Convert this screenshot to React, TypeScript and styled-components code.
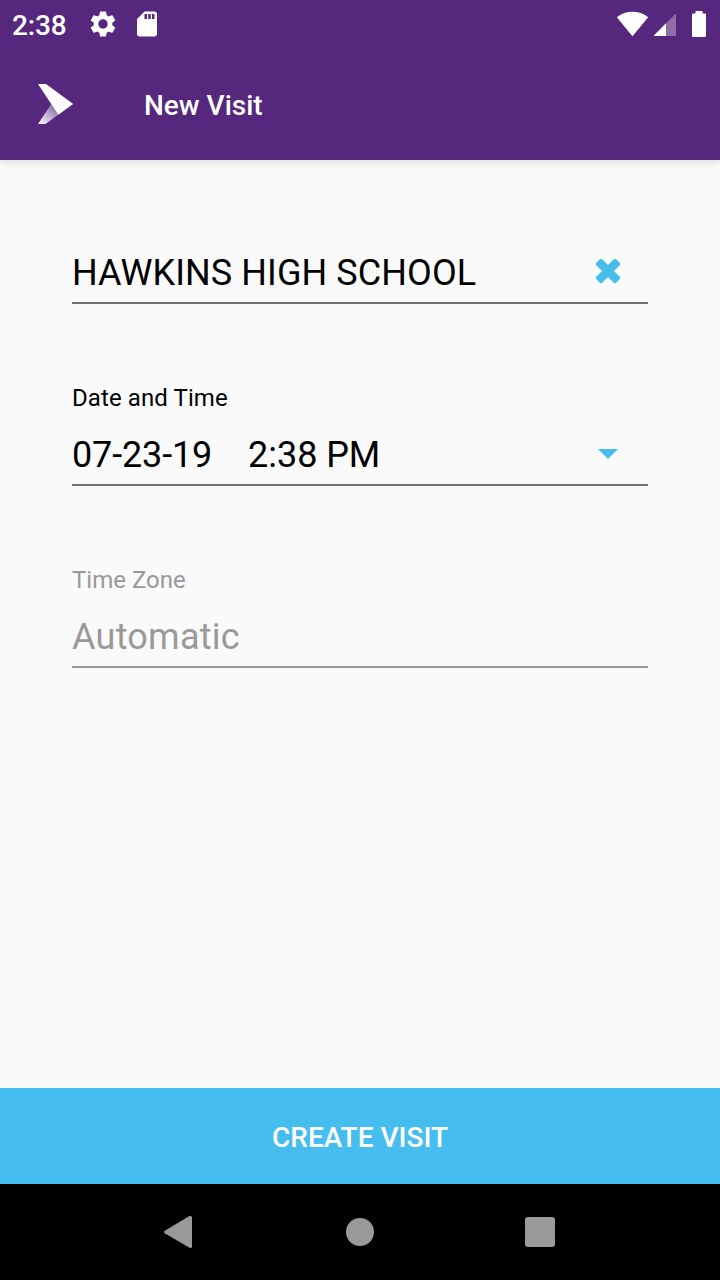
import React from "react";
import styled, { createGlobalStyle } from "styled-components";

const GlobalStyle = createGlobalStyle`
  * { box-sizing: border-box; }
  html, body { margin: 0; padding: 0; }
  body { font-family: Roboto, "Noto Sans", sans-serif; background: #fafafa; }
`;

const Screen = styled.div`
  width: 720px;
  height: 1280px;
  display: flex;
  flex-direction: column;
  overflow: hidden;
  background: #fafafa;
`;

const Header = styled.header`
  flex: none;
  background: #55277d;
  color: #fff;
  box-shadow: 0 2px 8px rgba(0, 0, 0, 0.13);
`;

const StatusBar = styled.div`
  height: 48px;
  display: flex;
  justify-content: space-between;
`;

const StatusGroup = styled.div`
  display: flex;
  align-items: flex-start;
`;

const Clock = styled.span`
  width: 88px;
  padding-left: 12px;
  font-size: 28px;
  font-weight: 500;
  line-height: 52px;
  height: 48px;
  letter-spacing: -0.15px;
  white-space: nowrap;
`;

const StatusIcon = styled.svg<{ $gap?: number }>`
  display: block;
  height: 48px;
  fill: #fff;
  margin-right: ${(p) => p.$gap ?? 0}px;
`;

const AppBar = styled.div`
  height: 112px;
  display: flex;
  align-items: center;
  padding-left: 36px;
`;

const Logo = styled.svg`
  display: block;
  width: 40px;
  height: 44px;
  margin-right: 68px;
`;

const Title = styled.h1`
  margin: 0;
  font-size: 28px;
  font-weight: 500;
  line-height: 36px;
  padding-top: 4px;
`;

const Form = styled.main`
  flex: 1;
  display: flex;
  flex-direction: column;
  padding: 82px 72px 0;
`;

const Field = styled.section<{ $disabled?: boolean }>`
  color: ${(p) => (p.$disabled ? "#999" : "#000")};
  border-bottom: 2px solid ${(p) => (p.$disabled ? "#999" : "#737373")};
  margin-bottom: 78px;
`;

const Label = styled.div<{ $tracking?: number }>`
  font-size: 24px;
  line-height: 32px;
  height: 42px;
  letter-spacing: ${(p) => p.$tracking ?? 0}px;
`;

const ValueRow = styled.div`
  height: 60px;
  display: flex;
  align-items: flex-start;
  font-size: 36px;
  line-height: 62px;
  white-space: pre;
`;

const Value = styled.span<{ $tracking?: number }>`
  margin-right: 36px;
  letter-spacing: ${(p) => p.$tracking ?? 0}px;
`;

const FieldIcon = styled.svg`
  display: block;
  width: 32px;
  height: 32px;
  margin: 14px 24px 0 auto;
  fill: #45bdef;
`;

const CreateButton = styled.button`
  flex: none;
  height: 96px;
  border: 0;
  padding: 4px 0 0;
  background: #45bdef;
  color: #fff;
  font: 500 28px/36px Roboto, sans-serif;
`;

const NavBar = styled.nav`
  flex: none;
  height: 96px;
  background: #000;
  display: flex;
  justify-content: center;
  align-items: center;
  gap: 134px;
`;

const NavIcon = styled.svg`
  display: block;
  width: 48px;
  height: 48px;
  fill: #999;
`;

export default function App() {
  return (
    <>
      <GlobalStyle />
      <Screen>
        <Header>
          <StatusBar>
            <StatusGroup>
              <Clock>2:38</Clock>
              <StatusIcon width="30" viewBox="88 0 30 48" $gap={14}>
                <path
                  transform="translate(87.4 8.4) scale(1.3)"
                  d="M19.14 12.94c.04-.3.06-.61.06-.94 0-.32-.02-.64-.07-.94l2.03-1.58c.18-.14.23-.41.12-.61l-1.92-3.32c-.12-.22-.37-.29-.59-.22l-2.39.96c-.5-.38-1.03-.7-1.62-.94l-.36-2.54c-.04-.24-.24-.41-.48-.41h-3.84c-.24 0-.43.17-.47.41l-.36 2.54c-.59.24-1.13.57-1.62.94l-2.39-.96c-.22-.08-.47 0-.59.22L2.74 8.87c-.12.21-.08.47.12.61l2.03 1.58c-.05.3-.09.63-.09.94s.02.64.07.94l-2.03 1.58c-.18.14-.23.41-.12.61l1.92 3.32c.12.22.37.29.59.22l2.39-.96c.5.38 1.03.7 1.62.94l.36 2.54c.05.24.24.41.48.41h3.84c.24 0 .44-.17.47-.41l.36-2.54c.59-.24 1.13-.56 1.62-.94l2.39.96c.22.08.47 0 .59-.22l1.92-3.32c.12-.22.07-.47-.12-.61l-2.01-1.58zM12 15.6c-1.98 0-3.6-1.62-3.6-3.6s1.62-3.6 3.6-3.6 3.6 1.62 3.6 3.6-1.62 3.6-3.6 3.6z"
                />
              </StatusIcon>
              <StatusIcon width="30" viewBox="132 0 30 48">
                <path
                  transform="translate(132 9) scale(1.25)"
                  d="M18 2h-8L4.02 8 4 20c0 1.1.9 2 2 2h12c1.1 0 2-.9 2-2V4c0-1.1-.9-2-2-2zm-6 6h-2V4h2v4zm3 0h-2V4h2v4zm3 0h-2V4h2v4z"
                />
              </StatusIcon>
            </StatusGroup>
            <StatusGroup>
              <StatusIcon width="34" viewBox="616 0 34 48" $gap={2}>
                <path d="M632.5 36.2 616.8 17.3C621.5 13.6 627 11.8 632.5 11.8S643.5 13.6 648.2 17.3Z" />
              </StatusIcon>
              <StatusIcon width="26" viewBox="652 0 26 48" $gap={12}>
                <path fillOpacity=".33" d="M666 23.300 675 14.300Q676 13.500 676 14.600V36H666Z" />
                <path d="M666 23.300V36H654.300Q653.500 35.800 654.100 35.200Z" />
              </StatusIcon>
              <StatusIcon width="18" viewBox="690 0 18 48" $gap={12}>
                <path d="M695.5 11H702.5V13.5H705Q706 13.5 706 14.5V36Q706 37 705 37H693Q692 37 692 36V14.5Q692 13.5 693 13.5H695.5Z" />
              </StatusIcon>
            </StatusGroup>
          </StatusBar>
          <AppBar>
            <Logo viewBox="36 82 40 44">
              <defs>
                <linearGradient id="fold" gradientUnits="userSpaceOnUse" x1="41" y1="124" x2="54" y2="107">
                  <stop offset="0" stopColor="#fff" stopOpacity=".95" />
                  <stop offset="1" stopColor="#fff" stopOpacity=".35" />
                </linearGradient>
              </defs>
              <path fill="url(#fold)" d="M51.2 104 38 124H45.5L58.5 114.5Z" />
              <path fill="#fff" d="M38 84H46L73.2 104 58.3 114.7Z" />
            </Logo>
            <Title>New Visit</Title>
          </AppBar>
        </Header>
        <Form>
          <Field>
            <ValueRow>
              <Value $tracking={0.09}>HAWKINS HIGH SCHOOL</Value>
              <FieldIcon viewBox="0 0 32 32">
                <g transform="translate(16 15) rotate(45)">
                  <rect x="-14" y="-4.2" width="28" height="8.4" rx="1.7" />
                  <rect x="-4.2" y="-14" width="8.4" height="28" rx="1.7" />
                </g>
              </FieldIcon>
            </ValueRow>
          </Field>
          <Field>
            <Label $tracking={0.09}>Date and Time</Label>
            <ValueRow>
              <Value $tracking={-0.15}>07-23-19</Value>
              <Value $tracking={-0.05}>2:38 PM</Value>
              <FieldIcon viewBox="0 0 32 32">
                <path d="M6 11H26L16 21Z" />
              </FieldIcon>
            </ValueRow>
          </Field>
          <Field $disabled>
            <Label>Time Zone</Label>
            <ValueRow>
              <Value $tracking={0.25}>Automatic</Value>
            </ValueRow>
          </Field>
        </Form>
        <CreateButton>CREATE VISIT</CreateButton>
        <NavBar>
          <NavIcon viewBox="0 0 48 48">
            <path d="M36 8h.8Q38 8 38 9.500V38.500Q38 40 36.800 40L35.500 39.800 10.800 25.200Q9 24 10.800 22.800L35 8.300Z" />
          </NavIcon>
          <NavIcon viewBox="0 0 48 48">
            <circle cx="24" cy="24" r="14" />
          </NavIcon>
          <NavIcon viewBox="0 0 48 48">
            <rect x="7" y="9" width="30" height="30" rx="3" />
          </NavIcon>
        </NavBar>
      </Screen>
    </>
  );
}
